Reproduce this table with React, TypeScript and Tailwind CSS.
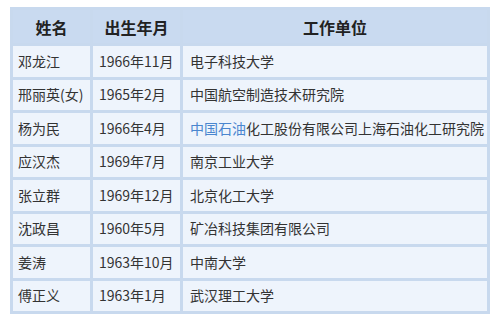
import React from "react";

const rows: [string, string, React.ReactNode][] = [
  ["邓龙江", "1966年11月", "电子科技大学"],
  ["邢丽英(女)", "1965年2月", "中国航空制造技术研究院"],
  [
    "杨为民",
    "1966年4月",
    <>
      <span className="text-[#4a86cf]">中国石油</span>化工股份有限公司上海石油化工研究院
    </>,
  ],
  ["应汉杰", "1969年7月", "南京工业大学"],
  ["张立群", "1969年12月", "北京化工大学"],
  ["沈政昌", "1960年5月", "矿冶科技集团有限公司"],
  ["姜涛", "1963年10月", "中南大学"],
  ["傅正义", "1963年1月", "武汉理工大学"],
];

export default function App() {
  return (
    <div
      className="w-[499px] h-[322px] bg-white pt-[7px] pl-[10px]"
      style={{ fontFamily: '"Noto Sans CJK SC", "Noto Sans", sans-serif' }}
    >
      <table className="w-[480px] border-separate border-spacing-[3px] bg-[#c8d9ee] text-[14px] text-[#333]">
        <colgroup>
          <col className="w-[77px]" />
          <col className="w-[87px]" />
          <col />
        </colgroup>
        <thead>
          <tr className="h-[33px]">
            {["姓名", "出生年月", "工作单位"].map((h) => (
              <th key={h} className="bg-[#c9daf0] text-center text-[16px] font-bold text-[#222] p-0">
                {h}
              </th>
            ))}
          </tr>
        </thead>
        <tbody>
          {rows.map(([name, date, org]) => (
            <tr key={name} className="h-[30.5px]">
              <td className="bg-[#eef4fc] py-0 pr-0 pl-[5px] whitespace-nowrap">{name}</td>
              <td className="bg-[#eef4fc] py-0 pr-0 pl-[6px] whitespace-nowrap">{date}</td>
              <td className="bg-[#eef4fc] py-0 pr-0 pl-[7px] whitespace-nowrap">{org}</td>
            </tr>
          ))}
        </tbody>
      </table>
    </div>
  );
}
